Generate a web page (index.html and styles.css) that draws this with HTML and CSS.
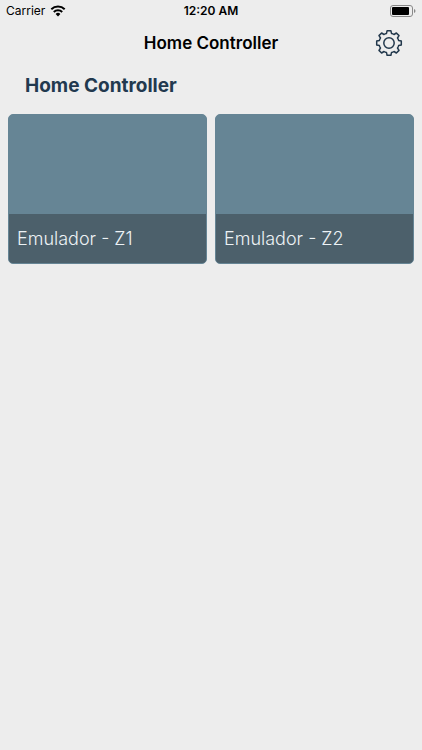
FILE: index.html
```html
<!DOCTYPE html>
<html lang="en">
<head>
  <meta charset="utf-8">
  <meta name="viewport" content="width=device-width, initial-scale=1">
  <title>Home Controller</title>
  <link rel="stylesheet" href="styles.css">
</head>
<body>
  <div class="status-bar">
    <div class="carrier">
      <span>Carrier</span>
      <svg class="wifi" width="16" height="12" viewBox="0 0 16 12" aria-hidden="true">
        <path d="M1.3 4.3a9.6 9.6 0 0 1 13.400 0" />
        <path d="M3.800 7a6 6 0 0 1 8.400 0" />
        <path class="dot" d="M5.600 9a3.500 3.500 0 0 1 4.800 0L8 11.400z" />
      </svg>
    </div>
    <span class="time">12:20 AM</span>
    <svg class="battery" width="26" height="12" viewBox="0 0 26 12" aria-hidden="true">
      <rect class="shell" x=".5" y=".5" width="22" height="11" rx="2.5" />
      <rect x="2" y="2" width="17" height="8" rx="1" />
      <path class="tip" d="M24 4v4q1.500-.5 1.500-2T24 4z" />
    </svg>
  </div>

  <header class="nav-bar">
    <h1>Home Controller</h1>
    <button class="settings" type="button" aria-label="Settings">
      <svg width="28" height="28" viewBox="-14 -14 28 28" aria-hidden="true">
        <path d="M-1.900-12.300H1.900L2.500-9.600Q3.900-9.400 5-8.500L7.400-10L10-7.400L8.500-5Q9.400-3.900 9.600-2.500L12.300-1.900V1.900L9.600 2.500Q9.400 3.900 8.500 5L10 7.400L7.400 10L5 8.500Q3.900 9.400 2.500 9.600L1.900 12.300H-1.900L-2.500 9.600Q-3.900 9.400-5 8.500L-7.400 10L-10 7.400L-8.500 5Q-9.400 3.900-9.600 2.500L-12.300 1.900V-1.900L-9.600-2.500Q-9.400-3.900-8.500-5L-10-7.400L-7.400-10L-5-8.500Q-3.900-9.400-2.500-9.600Z" />
        <circle r="5.200" />
      </svg>
    </button>
  </header>

  <main>
    <h2>Home Controller</h2>
    <div class="zones">
      <button class="zone" type="button">
        <span class="zone-name">Emulador - Z1</span>
      </button>
      <button class="zone" type="button">
        <span class="zone-name">Emulador - Z2</span>
      </button>
    </div>
  </main>
</body>
</html>
```

FILE: styles.css
```css
* {
  box-sizing: border-box;
}

body {
  margin: 0;
  min-height: 100vh;
  background: #ededed;
  color: #000;
  font-family: Inter, "Liberation Sans", sans-serif;
}

/* status bar */
.status-bar {
  display: grid;
  grid-template-columns: 1fr auto 1fr;
  align-items: center;
  height: 22px;
  padding: 0 6px;
  font-size: 12px;
  line-height: 22px;
}

.carrier {
  display: flex;
  align-items: center;
  gap: 5px;
}

.wifi {
  fill: none;
  stroke: #000;
  stroke-width: 2;
}

.wifi .dot {
  fill: #000;
  stroke: none;
}

.time {
  font-weight: 600;
}

.battery {
  justify-self: end;
}

.battery .shell {
  fill: none;
  stroke: #888;
}

.battery .tip {
  fill: #888;
}

/* title and settings */
.nav-bar {
  display: grid;
  grid-template-columns: 1fr auto 1fr;
  align-items: center;
  height: 42px;
  padding: 0 19px;
}

h1 {
  grid-column: 2;
  margin: 0;
  font-size: 17px;
  font-weight: 600;
  line-height: 24px;
}

.settings {
  justify-self: end;
  height: 28px;
  padding: 0;
  border: 0;
  background: none;
  cursor: pointer;
}

.settings svg {
  display: block;
  fill: none;
  stroke: #22384c;
  stroke-width: 1.5;
  stroke-linejoin: round;
}

/* zones */
main {
  padding: 10px 8px;
}

h2 {
  margin: 0 17px 16px;
  color: #22394f;
  font-size: 19px;
  font-weight: 700;
  line-height: 24px;
}

.zones {
  display: grid;
  grid-template-columns: 1fr 1fr;
  gap: 8px;
}

.zone {
  display: flex;
  align-items: flex-end;
  height: 150px;
  padding: 0;
  overflow: hidden;
  border: 1px solid #668595;
  border-radius: 5px;
  background: #668595;
  cursor: pointer;
}

.zone-name {
  flex: 1;
  padding: 1px 8px 0;
  background: #4c606b;
  color: #ecf2f5;
  font-family: Inter, "Liberation Sans", sans-serif;
  font-size: 18px;
  font-weight: 300;
  line-height: 48px;
  text-align: left;
}
```
